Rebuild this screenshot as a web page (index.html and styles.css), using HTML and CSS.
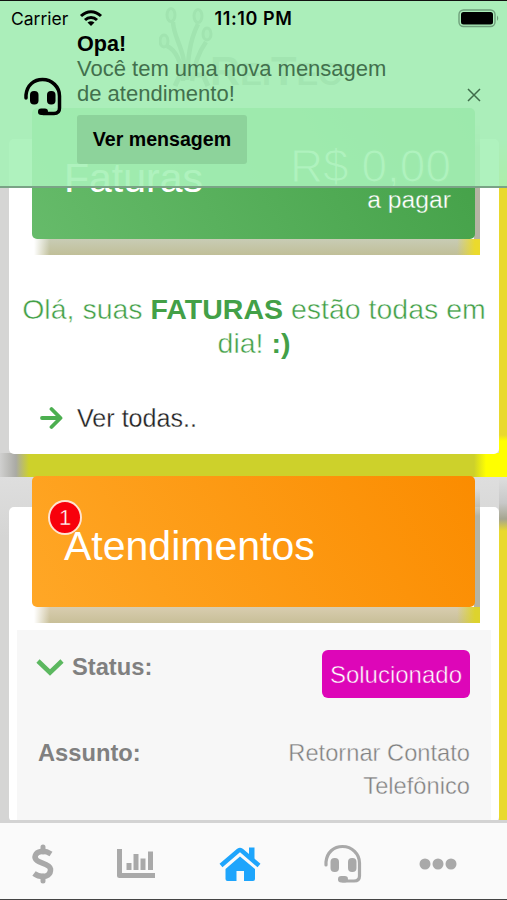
FILE: index.html
```html
<!DOCTYPE html>
<html lang="pt-BR">
  <head>
    <meta charset="utf-8" />
    <title>AreiTec</title>
    <meta name="viewport" content="width=device-width, initial-scale=1" />
    <link rel="stylesheet" href="styles.css">
  </head>
  <body>
    <div class="screen">
      <main class="content">
        <section class="section invoices">
          <div class="logo">
            <svg width="60" height="83" viewBox="0 0 60 83" fill="none" stroke="#707070" stroke-width="4.500">
              <path d="M14 16C15 34 26 41 27 74M39 18C31 34 29 50 28 74M8 40C17 44 23 57 24 75M47 36C39 47 35 60 33 75" />
              <path d="M16 80L21 69H44L49 80" stroke-width="5" />
              <g stroke-width="3" fill="#bbb">
                <ellipse cx="12" cy="9" rx="4" ry="6.500" />
                <ellipse cx="39" cy="10" rx="4" ry="6.500" />
                <ellipse cx="5" cy="35" rx="4" ry="6" />
                <ellipse cx="48" cy="28" rx="4" ry="6" />
              </g>
            </svg>
            <span class="logo-text"><big>R</big>EI<big>T</big>EC</span>
          </div>
          <div class="card">
            <div class="header-wrap">
              <div class="card-header green">
                <h2>Faturas</h2>
                <div class="total">
                  <div class="price">R$ 0,00</div>
                  <div class="to-pay">a pagar</div>
                </div>
              </div>
            </div>
            <p class="message">Olá, suas <b>FATURAS</b> estão todas em dia! <b>:)</b></p>
            <a class="see-all">
              <svg width="24" height="24" viewBox="0 0 24 24" fill="none" stroke="#4caf50" stroke-width="3.800" stroke-linecap="round" stroke-linejoin="round">
                <path d="M3 12H21M12.500 3L21.500 12L12.500 21" />
              </svg>
              <span>Ver todas..</span>
            </a>
          </div>
        </section>

        <section class="section tickets">
          <div class="card">
            <div class="header-wrap">
              <div class="card-header orange">
                <h2>Atendimentos</h2>
                <span class="badge">1</span>
              </div>
            </div>
            <div class="ticket">
              <div class="row">
                <div class="label">
                  <svg width="28" height="18" viewBox="0 0 28 18" fill="none" stroke="#5cb860" stroke-width="4.600">
                    <path d="M2 3L14 14.500L26 3" />
                  </svg>
                  <b>Status:</b>
                </div>
                <span class="tag">Solucionado</span>
              </div>
              <div class="row">
                <b class="label">Assunto:</b>
                <span class="value">Retornar Contato Telefônico</span>
              </div>
            </div>
          </div>
        </section>
      </main>

      <nav class="tabbar">
        <a>
          <svg width="24" height="40" viewBox="0 0 24 40" fill="none" stroke="#a9a9a9">
            <path d="M12 3V8M12 32V37" stroke-width="5" stroke-linecap="round" />
            <path d="M20 10C16 7.500 13 7 10 7.500C4 8.500 2.500 13.500 6 16.500C9 19.500 18.500 19.500 19.500 25C20 31 15 32.500 12 32.500C8 32.500 5 31 3 29.500" stroke-width="5.500" />
          </svg>
        </a>
        <a>
          <svg width="40" height="32" viewBox="0 0 40 32" fill="none" stroke="#a9a9a9" stroke-width="5">
            <path d="M3.500 1V27.500H39" stroke-linejoin="round" />
            <path d="M13 15V22M20 6V22M27 10.500V22M34.500 3.500V22" />
          </svg>
        </a>
        <a>
          <svg width="44" height="36" viewBox="0 0 44 36" fill="#1ea5fc">
            <path d="M22 10.500L37 23V33Q37 35 35 35H26V25H18.500V35H9.500Q7.500 35 7.500 33V23Z" />
            <path d="M3 19.500L20.500 4.500Q22 3.500 23.500 4.500L41 19.500" fill="none" stroke="#1ea5fc" stroke-width="4.500" />
            <path d="M31 1.500H36.500V14L31 9Z" />
          </svg>
        </a>
        <a>
          <svg width="40" height="40" viewBox="0 0 40 40" fill="none" stroke="#a9a9a9" stroke-width="3.200" stroke-linecap="round">
            <path d="M3 21V18C4 8 11 2.500 19.500 2.500C29 2.500 36.500 10 36.500 19V32Q36.500 37 31 37H20" />
            <rect x="7.500" y="14" width="8.500" height="14" rx="4" fill="#a9a9a9" stroke="none" />
            <rect x="25" y="14" width="8.500" height="14" rx="4" fill="#a9a9a9" stroke="none" />
            <rect x="15" y="32" width="10" height="6.500" rx="3.200" fill="#a9a9a9" stroke="none" />
          </svg>
        </a>
        <a>
          <svg width="38" height="12" viewBox="0 0 38 12" fill="#a9a9a9">
            <circle cx="6" cy="6" r="5.500" />
            <circle cx="19" cy="6" r="5.500" />
            <circle cx="32" cy="6" r="5.500" />
          </svg>
        </a>
      </nav>

      <!-- notification laid over the top of the page -->
      <div class="toast">
        <div class="statusbar">
          <div class="carrier">
            <span>Carrier</span>
            <svg width="24" height="17" viewBox="0 0 24 17" fill="none" stroke="#000" stroke-width="3">
              <path d="M2 6C8 0.300 16 0.300 22 6M6 10C9.500 6.700 14.500 6.700 18 10" />
              <path d="M12 16L8.500 12.500Q12 9.800 15.500 12.500Z" fill="#000" stroke="none" />
            </svg>
          </div>
          <span class="clock">11:10 PM</span>
          <svg class="battery" width="42" height="19" viewBox="0 0 42 19">
            <rect x="1" y="1" width="36" height="16.500" rx="4.500" fill="none" stroke="#6f9f7b" stroke-width="1.400" />
            <rect x="3" y="3" width="32" height="12.500" rx="2.500" />
            <path d="M39 6.500Q41.500 9 39 12Z" fill="#6f9f7b" />
          </svg>
        </div>
        <div class="toast-body">
          <svg class="toast-icon" width="40" height="40" viewBox="0 0 40 40" fill="none" stroke="#000" stroke-width="3.500" stroke-linecap="round">
            <path d="M3 21V18C4 8 11 2.500 19.500 2.500C29 2.500 36.500 10 36.500 19V31Q36.500 36.500 31 36.500H20" />
            <rect x="7" y="14" width="8.500" height="13.500" rx="4" fill="#000" stroke="none" />
            <rect x="24" y="14" width="8.500" height="13.500" rx="4" fill="#000" stroke="none" />
            <rect x="15" y="31.500" width="10" height="6.500" rx="3.200" fill="#000" stroke="none" />
          </svg>
          <div class="toast-text">
            <b>Opa!</b>
            <p>Você tem uma nova mensagem<br />de atendimento!</p>
            <button>Ver mensagem</button>
          </div>
          <svg class="close" width="14" height="14" viewBox="0 0 14 14" stroke="#3f6c4a" stroke-width="1.500">
            <path d="M1 1L13 13M13 1L1 13" />
          </svg>
        </div>
      </div>
    </div>
  </body>
</html>
```
FILE: styles.css
```css
* {
  box-sizing: border-box;
}
body {
  margin: 0;
  font-family: "Liberation Sans", Arial, sans-serif;
  font-size: 24px;
}
h2, p {
  margin: 0;
  font-weight: normal;
}
.screen {
  position: relative;
  display: flex;
  flex-direction: column;
  height: 900px;
  overflow: hidden;
  border-top: 1px solid #111;
  border-bottom: 1px solid #444;
}
.content {
  height: 819px;
  overflow: hidden;
}

/* Sections and their coloured edges */
.section {
  padding: 0 8px 0 9px;
  background-color: #d5d5d4;
}
.invoices {
  height: 476px;
  background:
    linear-gradient(#e9d92e00, #e9d92e 50px 296px, #ff0 302px) 100% 100% / 8px 338px no-repeat,
    linear-gradient(90deg, #d0d0cf 0, #aaaaa5 16px, #cdd12b 29px 474px, #ff0 486px) 0 100% / 100% 24px no-repeat,
    #d5d5d4;
}
.tickets {
  height: 343px;
  padding-top: 30px;
  background:
    linear-gradient(#dedede, #c8c8c8 26px, #a5a590 42px, #e9d92e 54px) 100% 0 / 8px 100% no-repeat,
    linear-gradient(#dedede, #d5d5d4 60px);
}
.logo {
  display: flex;
  height: 138px;
  padding: 5px 0 0 150px;
}
.logo-text {
  margin: 47px 0 0 -9px;
  color: #777;
  font-size: 32px;
  line-height: 36px;
  font-weight: bold;
  transform: scaleX(1.02);
  transform-origin: left;
}
.logo-text big {
  font-size: 41px;
}

/* Cards */
.card {
  height: 315px;
  border-radius: 5px;
  background: #fff;
}
.header-wrap {
  width: 448px;
  height: 147px;
  margin: 0 0 0 23px;
  transform: translateY(-31px);
  background:
    linear-gradient(90deg, #fff 2px, #fff0 18px 425px, #ebda2c 443px) 0 100% / 100% 16px no-repeat,
    linear-gradient(#c8ccb5, #c0bf98) 0 100% / 100% 16px no-repeat,
    linear-gradient(#bdbdb700 12px, #b5b4a3 40px) 100% 0 / 6px 131px no-repeat;
}
.card-header {
  position: relative;
  display: flex;
  justify-content: space-between;
  width: 443px;
  height: 131px;
  padding: 0 24px 0 32px;
  border-radius: 5px;
  color: #fff;
}
.card-header h2 {
  padding-top: 46px;
  font-size: 41px;
  line-height: 48px;
}
.green {
  background: linear-gradient(60deg, #66bb6a, #43a047);
}
.orange {
  background: linear-gradient(60deg, #ffa726, #fb8c00);
}
.tickets .header-wrap {
  background:
    linear-gradient(90deg, #fff 2px, #fff0 18px 425px, #ddd32d 443px) 0 100% / 100% 16px no-repeat,
    linear-gradient(#d8cdb0, #c8bf98) 0 100% / 100% 16px no-repeat,
    linear-gradient(#bdbdb700 12px, #b5b4a3 40px) 100% 0 / 6px 131px no-repeat;
}
.total {
  padding-top: 33px;
  text-align: right;
}
.price {
  font-size: 46px;
  line-height: 50px;
  -webkit-text-stroke: 1.2px #55ac58;
}
.to-pay {
  font-size: 24.7px;
  line-height: 18px;
  -webkit-text-stroke: 0.3px #4da651;
}
.message {
  margin: 7px -10px 0;
  color: #43a047;
  font-size: 28.5px;
  line-height: 33.5px;
  text-align: center;
  -webkit-text-stroke: 0.5px #fff;
}
.message b {
  -webkit-text-stroke: 0;
}
.see-all {
  display: flex;
  align-items: center;
  gap: 14px;
  margin: 43px 0 0 30px;
  color: #222;
  font-size: 25.1px;
  line-height: 30px;
  -webkit-text-stroke: 0.3px #fff;
}

/* Unread counter over the card title */
.badge {
  position: absolute;
  left: 16px;
  top: 24px;
  width: 34px;
  height: 35px;
  border: 2px solid #ffe3d0;
  border-radius: 50%;
  background: #f8000b;
  font-size: 22px;
  line-height: 32px;
  text-align: center;
  -webkit-text-stroke: 0.4px #f8000b;
}

/* Ticket list */
.ticket {
  height: 200px;
  margin: -24px 8px 0;
  padding: 20px 21px 0;
  background: #f7f7f7;
  color: #808080;
  font-size: 23.7px;
}
.row {
  display: flex;
  justify-content: space-between;
  line-height: 33px;
}
.row + .row {
  margin-top: 39px;
}
.row .label {
  display: flex;
  align-items: center;
  align-self: flex-start;
  gap: 8px;
}
.row div.label {
  margin-left: -2px;
  line-height: 34px;
}
.tag {
  height: 48px;
  padding: 0 8px;
  border-radius: 6px;
  background: #dd06b8;
  color: #fff;
  font-size: 24px;
  line-height: 50px;
  -webkit-text-stroke: 0.5px #dd06b8;
}
.value {
  width: 200px;
  text-align: right;
  -webkit-text-stroke: 0.4px #f7f7f7;
}

/* Bottom navigation */
.tabbar {
  display: grid;
  grid-template-columns: 86px 100px 107px 99px 92px;
  flex: 1;
  border-top: 3px solid #d3d3d3;
  background: #fafafa;
}
.tabbar a {
  display: flex;
  align-items: center;
  justify-content: center;
  padding-top: 5px;
}

/* Notification */
.toast {
  position: absolute;
  top: 0;
  left: 0;
  width: 100%;
  height: 187px;
  border-bottom: 2px solid #7aa386;
  background: rgba(166, 241, 183, 0.9);
  color: #000;
}
.statusbar {
  display: grid;
  grid-template-columns: 1fr auto 1fr;
  align-items: center;
  height: 30px;
  padding: 4px 7px 0 11px;
  font-family: Inter, sans-serif;
  font-size: 17.5px;
}
.carrier {
  display: flex;
  align-items: center;
  gap: 11px;
}
.clock {
  margin-right: 4px;
  font-size: 18px;
  font-weight: 600;
  letter-spacing: 0.6px;
}
.battery {
  justify-self: end;
}
.toast-body {
  display: flex;
  padding: 0 26px 0 23px;
}
.toast-icon {
  margin-top: 46px;
}
.toast-text {
  flex: 1;
  margin-left: 14px;
  font-size: 22px;
  line-height: 25px;
}
.toast-text p {
  color: #42704d;
}
.toast-text b {
  display: block;
  font-size: 21.6px;
}
.toast-text button {
  display: block;
  width: 170px;
  height: 49px;
  margin-top: 9px;
  padding: 0;
  border: none;
  border-radius: 3px;
  background: #8dd39b;
  font-family: inherit;
  font-size: 19.6px;
  font-weight: bold;
}
.close {
  margin-top: 57px;
}
```
